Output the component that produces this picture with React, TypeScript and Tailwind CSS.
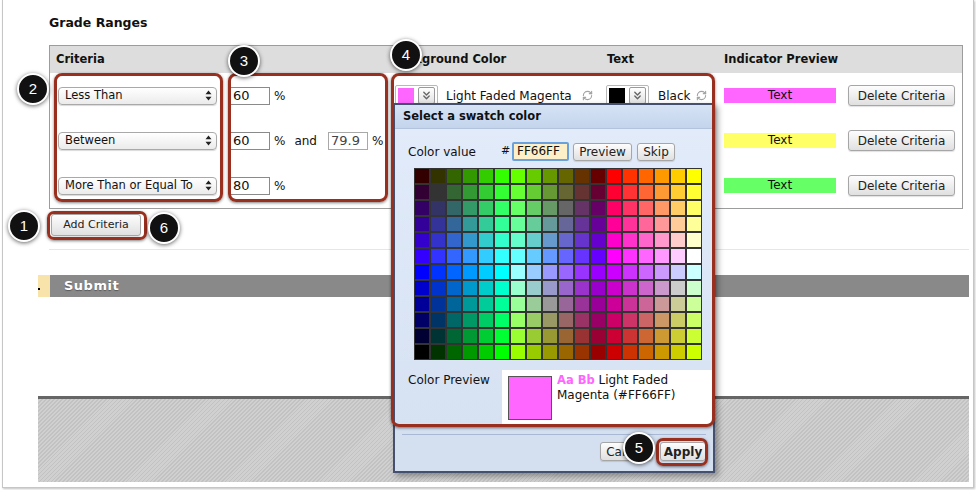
import React from 'react';
import { RefreshCw, ChevronsDown } from 'lucide-react';

const VALS = [0x00, 0x33, 0x66, 0x99, 0xcc, 0xff];
const h2 = (n: number) => n.toString(16).padStart(2, '0').toUpperCase();
function swatch(r: number, c: number) {
  const block = Math.floor(c / 6);
  const ci = c % 6;
  let R: number, B: number;
  if (r < 6) {
    R = [0x33, 0x66, 0xff][block];
    B = VALS[r];
  } else {
    R = [0x00, 0x99, 0xcc][block];
    B = VALS[11 - r];
  }
  const G = block === 1 ? VALS[5 - ci] : VALS[ci];
  return `#${h2(R)}${h2(G)}${h2(B)}`;
}

const btn =
  'flex items-center justify-center border border-[#a6a6a6] rounded-[3px] bg-gradient-to-b from-[#fdfdfd] to-[#e0e0e0] shadow-[0_1px_1px_rgba(0,0,0,0.12)] text-[#222] whitespace-nowrap';

function SelectBox({ label }: { label: string }) {
  return (
    <div className="flex items-center justify-between w-[159px] h-[18px] pl-[6px] pr-[4px] rounded-[4px] border border-[#a9a9a9] bg-gradient-to-b from-white to-[#ebebeb] shadow-[0_1px_1px_rgba(0,0,0,0.15)] text-[11.5px] leading-none text-[#111]">
      <span className="whitespace-nowrap">{label}</span>
      <svg width="7" height="11" viewBox="0 0 7 11">
        <path d="M3.5 0.5 L6.5 4.3 H0.5Z M3.5 10.5 L6.5 6.7 H0.5Z" fill="#222" />
      </svg>
    </div>
  );
}

function Num({ v, light }: { v: string; light?: boolean }) {
  return (
    <div
      className={
        'w-[40px] h-[18px] border bg-white pl-[2px] text-[13px] leading-[16px] ' +
        (light ? 'border-[#a8a8a8] text-[#444]' : 'border-[#8a8a8a] text-[#111]')
      }
    >
      {v}
    </div>
  );
}

function SwatchWidget({ color }: { color: string }) {
  return (
    <div className="flex items-center gap-[4px] h-[22px] px-[2px] border border-[#b8b8b8] rounded-[2px] bg-white">
      <div className={'w-[16px] h-[16px] ' + color} />
      <div className="w-[17px] h-[17px] border border-[#9a9a9a] rounded-[2px] bg-gradient-to-b from-white to-[#e2e2e2] flex items-center justify-center">
        <ChevronsDown size={13} color="#666" strokeWidth={2.5} />
      </div>
    </div>
  );
}

const rows = [
  { sel: 'Less Than', kind: 'one', v: '60', bg: 'bg-[#ff66ff]', name: 'Light Faded Magenta' },
  { sel: 'Between', kind: 'two', v: '60', bg: 'bg-[#ffff66]', name: 'Light Faded Yellow' },
  { sel: 'More Than or Equal To', kind: 'one', v: '80', bg: 'bg-[#66ff66]', name: 'Light Faded Green' },
];

const cols = 'grid grid-cols-[176px_165px_212px_117px_124px_118px]';

export default function App() {
  return (
    <div className="relative w-[976px] h-[490px] bg-white overflow-hidden font-['DejaVu_Sans',sans-serif] text-[12px] text-[#111]">
      {/* page frame */}
      <div className="w-[972px] h-[488px] ml-[2px] border-x border-b border-[#c6c6c6] shadow-[1px_1px_2px_rgba(0,0,0,0.25)] pt-[15px]">
        <div className="ml-[46px] h-[16px] leading-[16px] font-bold text-[12.5px] text-[#111]">Grade Ranges</div>

        {/* table */}
        <div className="ml-[46px] mt-[14px] w-[914px] border border-[#9c9c9c]">
          <div className={cols + ' h-[27px] bg-[#dcdddc] items-center font-bold text-[11.5px]'}>
            <div className="pl-[6px]">Criteria</div>
            <div />
            <div>Background Color</div>
            <div className="pl-[4px]">Text</div>
            <div className="pl-[4px]">Indicator Preview</div>
            <div />
          </div>
          {rows.map((r, i) => (
            <div key={i} className={cols + ' h-[45px] items-center'}>
              <div className="pl-[8px]">
                <SelectBox label={r.sel} />
              </div>
              <div className="pl-[4px] flex items-center">
                <Num v={r.v} />
                <span className="ml-[4px]">%</span>
                {r.kind === 'two' && (
                  <>
                    <span className="ml-[9px]">and</span>
                    <div className="ml-[11px]">
                      <Num v="79.9" light />
                    </div>
                    <span className="ml-[4px]">%</span>
                  </>
                )}
              </div>
              <div className="pl-[4px] flex items-center">
                <SwatchWidget color={r.bg} />
                <span className="ml-[8px] whitespace-nowrap">{r.name}</span>
                <RefreshCw size={11} color="#a3a3a3" strokeWidth={2.5} className="ml-[10px]" />
              </div>
              <div className="pl-[3px] flex items-center">
                <SwatchWidget color="bg-black" />
                <span className="ml-[9px]">Black</span>
                <RefreshCw size={11} color="#a3a3a3" strokeWidth={2.5} className="ml-[6px]" />
              </div>
              <div className="pl-[4px]">
                <div className={'w-[112px] h-[15px] text-center leading-[15px] ' + r.bg}>Text</div>
              </div>
              <div className="pl-[4px]">
                <div className={btn + ' w-[107px] h-[21px] text-[12px]'}>Delete Criteria</div>
              </div>
            </div>
          ))}
        </div>

        <div className={btn + ' ml-[48px] mt-[5px] w-[90px] h-[22px] text-[11px]'}>Add Criteria</div>

        <div className="ml-[46px] mt-[13px] w-[920px] h-px bg-[#e6e6e6]" />

        {/* submit bar */}
        <div className="ml-[35px] mt-[25px] w-[931px] h-[22px] flex">
          <div className="w-[12px] h-full bg-[#f8e4aa] relative">
            <span className="absolute left-0 top-[13px] w-[2px] h-[2px] bg-black" />
          </div>
          <div className="flex-1 bg-[#898989] pl-[14px] flex items-center text-white font-bold text-[13px] tracking-[0.5px] [text-shadow:0_1px_1px_rgba(0,0,0,0.35)]">
            Submit
          </div>
        </div>

        {/* hatched footer */}
        <div className="ml-[35px] mt-[99px] w-[931px] h-[86px] border-t-[3px] border-[#666] bg-[repeating-linear-gradient(135deg,#c2c2c2_0px,#c2c2c2_1.2px,#d0d0d0_1.2px,#d0d0d0_2.8px)]" />
      </div>

      {/* swatch popup */}
      <div className="absolute left-[393px] top-[103px] w-[322px] h-[370px] border-2 border-[#45506f] bg-[#d4dff0] shadow-[3px_3px_6px_rgba(0,0,0,0.35)] flex flex-col">
        <div className="h-[24px] shrink-0 bg-gradient-to-b from-[#d6e3f5] to-[#c3d4ec] border-b border-[#b3c3dc] pl-[8px] flex items-center font-bold text-[11.5px] text-[#111]">
          Select a swatch color
        </div>
        <div className="h-[299px] shrink-0 bg-gradient-to-b from-[#e1ebfa] to-[#d6e1f2] pl-[13px] pt-[13px]">
          <div className="flex items-center h-[19px]">
            <span className="w-[93px]">Color value</span>
            <span className="w-[11px] text-[11px]">#</span>
            <div className="w-[57px] h-[19px] border-2 border-[#6aa0dc] rounded-[2px] bg-[#fdf0c9] pl-[3px] text-[12px] leading-[15px] text-[#111]">
              FF66FF
            </div>
            <div className={btn + ' ml-[4px] w-[59px] h-[18px] text-[12px]'}>Preview</div>
            <div className={btn + ' ml-[5px] w-[38px] h-[18px] text-[12px]'}>Skip</div>
          </div>
          <div className="ml-[6px] mt-[7px] w-[288px] grid grid-cols-[repeat(18,14px)] gap-[2px] p-[1px] bg-[#333]">
            {Array.from({ length: 12 }).map((_, r) =>
              Array.from({ length: 18 }).map((_, c) => (
                <div key={r + '-' + c} className="w-[14px] h-[14px]" style={{ backgroundColor: swatch(r, c) }} />
              ))
            )}
          </div>
          <div className="mt-[10px] h-[55px] flex">
            <div className="w-[94px] pt-[1px]">Color Preview</div>
            <div className="flex-1 bg-white pl-[6px] pt-[6px] flex items-start">
              <div className="w-[44px] h-[44px] bg-[#ff66ff] border border-[#555]" />
              <div className="ml-[5px] -mt-[3px] leading-[15px] text-[12px]">
                <span className="font-bold text-[11.5px] text-[#ff66ff]">Aa Bb</span> Light Faded
                <br />
                Magenta (#FF66FF)
              </div>
            </div>
          </div>
        </div>
        <div className="mx-[7px] mt-[6px] h-px bg-[#a9b9d5]" />
        <div className="mt-[7px] pr-[7px] flex justify-end gap-[7px]">
          <div className={btn + ' w-[53px] h-[19px] text-[12px]'}>Cancel</div>
          <div className={btn + ' w-[46px] h-[19px] text-[12px] font-bold'}>Apply</div>
        </div>
      </div>

      {/* annotation boxes */}
      <div className="absolute left-[54px] top-[73px] w-[169px] h-[129px] border-[3px] border-[#982f1f] rounded-[8px] shadow-[0_1px_3px_rgba(0,0,0,0.5)]" />
      <div className="absolute left-[228px] top-[73px] w-[160px] h-[129px] border-[3px] border-[#982f1f] rounded-[8px] shadow-[0_1px_3px_rgba(0,0,0,0.5)]" />
      <div className="absolute left-[391px] top-[73px] w-[324px] h-[354px] border-[3px] border-[#982f1f] rounded-[8px] shadow-[0_1px_3px_rgba(0,0,0,0.5)]" />
      <div className="absolute left-[47px] top-[211px] w-[100px] h-[29px] border-[3px] border-[#982f1f] rounded-[7px] shadow-[0_1px_3px_rgba(0,0,0,0.5)]" />
      <div className="absolute left-[656px] top-[438px] w-[52px] h-[28px] border-[3px] border-[#982f1f] rounded-[7px] shadow-[0_1px_3px_rgba(0,0,0,0.5)]" />

      {/* annotation badges */}
      <div className="absolute left-[17px] top-[73px] w-[32px] h-[32px] rounded-full bg-[#111] border-[2.5px] border-white shadow-[0_1px_4px_rgba(0,0,0,0.6)] flex items-center justify-center text-white text-[15px] font-['Liberation_Sans',sans-serif]">2</div>
      <div className="absolute left-[228px] top-[45px] w-[32px] h-[32px] rounded-full bg-[#111] border-[2.5px] border-white shadow-[0_1px_4px_rgba(0,0,0,0.6)] flex items-center justify-center text-white text-[15px] font-['Liberation_Sans',sans-serif]">3</div>
      <div className="absolute left-[390px] top-[39px] w-[32px] h-[32px] rounded-full bg-[#111] border-[2.5px] border-white shadow-[0_1px_4px_rgba(0,0,0,0.6)] flex items-center justify-center text-white text-[15px] font-['Liberation_Sans',sans-serif]">4</div>
      <div className="absolute left-[8px] top-[210px] w-[32px] h-[32px] rounded-full bg-[#111] border-[2.5px] border-white shadow-[0_1px_4px_rgba(0,0,0,0.6)] flex items-center justify-center text-white text-[15px] font-['Liberation_Sans',sans-serif]">1</div>
      <div className="absolute left-[148px] top-[212px] w-[32px] h-[32px] rounded-full bg-[#111] border-[2.5px] border-white shadow-[0_1px_4px_rgba(0,0,0,0.6)] flex items-center justify-center text-white text-[15px] font-['Liberation_Sans',sans-serif]">6</div>
      <div className="absolute left-[623px] top-[432px] w-[32px] h-[32px] rounded-full bg-[#111] border-[2.5px] border-white shadow-[0_1px_4px_rgba(0,0,0,0.6)] flex items-center justify-center text-white text-[15px] font-['Liberation_Sans',sans-serif]">5</div>
    </div>
  );
}
